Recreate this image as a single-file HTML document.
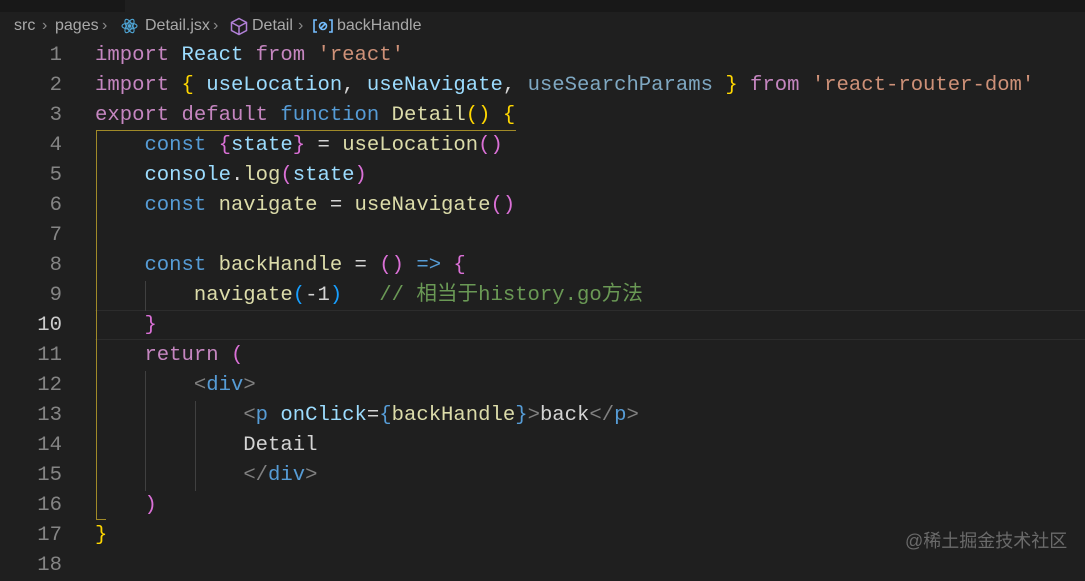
<!DOCTYPE html>
<html><head><meta charset="utf-8"><style>
html,body{margin:0;padding:0}
body{width:1085px;height:569px;background:#1f1f1f;position:relative;overflow:hidden;font-family:"Liberation Mono","Noto Sans CJK SC",monospace}
.tabs{position:absolute;left:0;top:0;width:1085px;height:12px;background:#181818}
.tab{position:absolute;top:0;height:12px;background:#1f1f1f}
.bc{position:absolute;top:16px;font:16px "Liberation Sans",sans-serif;color:#a9a9a9;white-space:nowrap;line-height:20px}
.sep{position:absolute;top:16px;font:16px "Liberation Sans",sans-serif;color:#8a8a8a;line-height:20px}
.ln{position:absolute;left:0;width:62px;text-align:right;font-size:20.6px;color:#858585;line-height:30px}
.cd{position:absolute;left:95px;font-size:20.6px;line-height:30px;white-space:pre;color:#d4d4d4}
.k{color:#c586c0}.v{color:#9cdcfe}.s2{color:#ce9178}.f{color:#dcdcaa}.y{color:#ffd700}.p{color:#da70d6}.b{color:#179fff}.c{color:#569cd6}.g{color:#6a9955}.t{color:#808080}
.guide{position:absolute;background:#404040;width:1px}
.wm{position:absolute;left:905px;top:527px;font:18px "Liberation Sans","Noto Sans CJK SC",sans-serif;color:#6a6a6a}
</style></head><body>
<div class="tabs"><div class="tab" style="left:125px;width:125px"></div></div>
<div class="bc" style="left:14px">src</div><div class="sep" style="left:42px">›</div>
<div class="bc" style="left:55px">pages</div><div class="sep" style="left:102px">›</div>
<svg style="position:absolute;left:121px;top:17px" width="17" height="18" viewBox="0 0 17 18" fill="none" stroke="#4fa6d6" stroke-width="1.1"><ellipse cx="8.5" cy="9" rx="7.5" ry="3"/><ellipse cx="8.5" cy="9" rx="7.5" ry="3" transform="rotate(60 8.5 9)"/><ellipse cx="8.5" cy="9" rx="7.5" ry="3" transform="rotate(120 8.5 9)"/><circle cx="8.5" cy="9" r="1.3" fill="#4fa6d6"/></svg>
<div class="bc" style="left:145px">Detail.jsx</div><div class="sep" style="left:213px">›</div>
<svg style="position:absolute;left:230px;top:17px" width="18" height="19" viewBox="0 0 18 19" fill="none" stroke="#b180d7" stroke-width="1.5"><path d="M9 1.5 L16.5 5.5 V13.5 L9 17.5 L1.5 13.5 V5.5 Z M1.5 5.5 L9 9.5 L16.5 5.5 M9 9.5 V17.5"/></svg>
<div class="bc" style="left:252px">Detail</div><div class="sep" style="left:298px">›</div>
<svg style="position:absolute;left:313px;top:19px" width="20" height="14" viewBox="0 0 20 14" fill="none" stroke="#75beff" stroke-width="1.6"><path d="M4 1 H1 V13 H4 M16 1 H19 V13 H16"/><circle cx="10" cy="7" r="3.5"/><path d="M7.5 9.5 L12.5 4.5"/></svg>
<div class="bc" style="left:337px">backHandle</div>
<div style="position:absolute;left:95px;top:310px;width:990px;height:30px;border-top:1px solid #2c2c2c;border-bottom:1px solid #2c2c2c;box-sizing:border-box"></div>
<div style="position:absolute;left:96px;top:130px;width:420px;height:1px;background:#a08a28"></div>
<div style="position:absolute;left:96px;top:130px;width:1px;height:390px;background:#a08a28"></div>
<div style="position:absolute;left:96px;top:519px;width:10px;height:1px;background:#a08a28"></div>
<div class="guide" style="left:145px;top:281px;height:30px"></div>
<div class="guide" style="left:145px;top:371px;height:120px"></div>
<div class="guide" style="left:195px;top:401px;height:90px"></div>
<div class="ln" style="top:41px">1<br>2<br>3<br>4<br>5<br>6<br>7<br>8<br>9<br><span style="color:#ccc">10</span><br>11<br>12<br>13<br>14<br>15<br>16<br>17<br>18</div>
<div class="cd" style="top:41px"><span class="k">import</span> <span class="v">React</span> <span class="k">from</span> <span class="s2">'react'</span>
<span class="k">import</span> <span class="y">{</span> <span class="v">useLocation</span>, <span class="v">useNavigate</span>, <span class="v" style="color:#7fa8c2">useSearchParams</span> <span class="y">}</span> <span class="k">from</span> <span class="s2">'react-router-dom'</span>
<span class="k">export</span> <span class="k">default</span> <span class="c">function</span> <span class="f">Detail</span><span class="y">()</span> <span class="y">{</span>
    <span class="c">const</span> <span class="p">{</span><span class="v">state</span><span class="p">}</span> = <span class="f">useLocation</span><span class="p">()</span>
    <span class="v">console</span>.<span class="f">log</span><span class="p">(</span><span class="v">state</span><span class="p">)</span>
    <span class="c">const</span> <span class="f">navigate</span> = <span class="f">useNavigate</span><span class="p">()</span>

    <span class="c">const</span> <span class="f">backHandle</span> = <span class="p">()</span> <span class="c">=&gt;</span> <span class="p">{</span>
        <span class="f">navigate</span><span class="b">(</span>-1<span class="b">)</span>   <span class="g">// 相当于history.go方法</span>
    <span class="p">}</span>
    <span class="k">return</span> <span class="p">(</span>
        <span class="t">&lt;</span><span class="c">div</span><span class="t">&gt;</span>
            <span class="t">&lt;</span><span class="c">p</span> <span class="v">onClick</span>=<span class="c">{</span><span class="f">backHandle</span><span class="c">}</span><span class="t">&gt;</span>back<span class="t">&lt;/</span><span class="c">p</span><span class="t">&gt;</span>
            Detail
            <span class="t">&lt;/</span><span class="c">div</span><span class="t">&gt;</span>
    <span class="p">)</span>
<span class="y">}</span>
</div>
<div class="wm">@稀土掘金技术社区</div>
</body></html>
